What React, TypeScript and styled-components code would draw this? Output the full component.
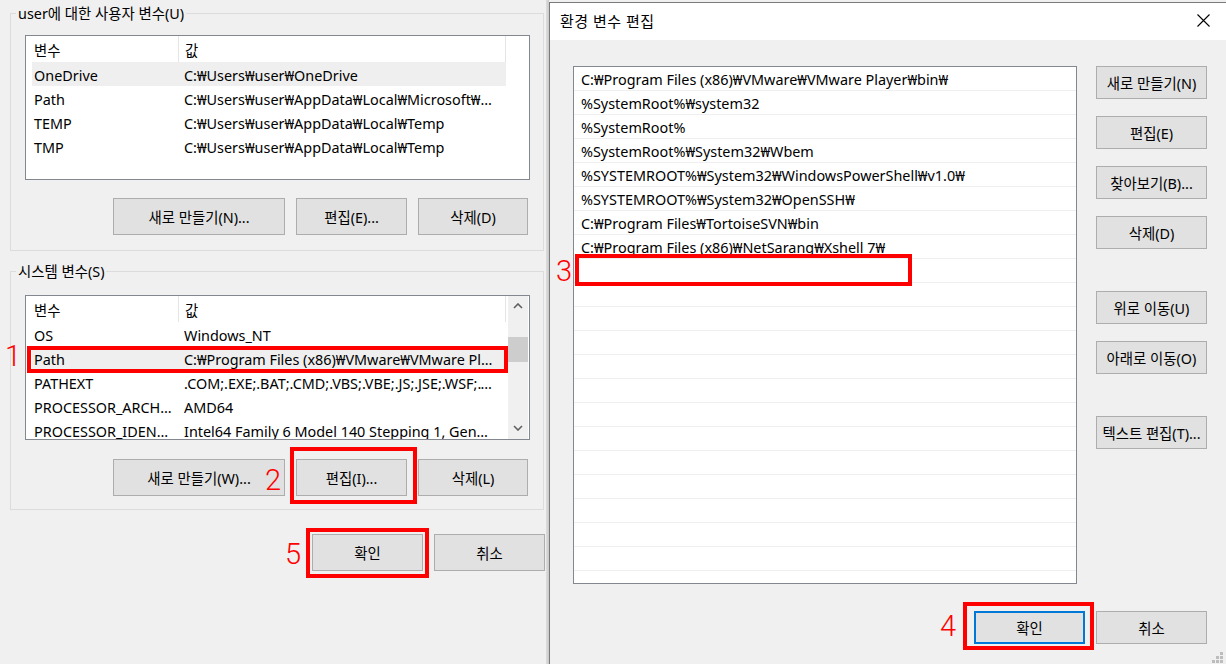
import React from 'react';
import styled, { createGlobalStyle } from 'styled-components';

const GlobalStyle = createGlobalStyle`
  html, body {
    margin: 0;
    padding: 0;
  }
  body {
    background: #f0f0f0;
    font-family: "Noto Sans", "Noto Sans CJK KR", sans-serif;
    font-size: 14.4px;
    color: #000;
    overflow: hidden;
  }
`;

const Screen = styled.div`
  position: relative;
  display: flex;
  width: 1226px;
  height: 664px;
  overflow: hidden;
  background: #f0f0f0;
`;

/* ---------- left window (환경 변수) ---------- */

const LeftPane = styled.div`
  flex: none;
  width: 546px;
  box-sizing: border-box;
  padding: 0 2px 0 10px;
`;

const Shadow = styled.div`
  flex: none;
  width: 3px;
  background: linear-gradient(to right, #dedede, #c9c9c9);
`;

const Group = styled.div<{ $top: number; $bottom: number }>`
  margin-top: ${p => p.$top}px;
  border: 1px solid #dcdcdc;
  padding: 0 13px ${p => p.$bottom}px 14px;
`;

const Legend = styled.div`
  width: fit-content;
  height: 20px;
  line-height: 20px;
  margin: -10px 0 0 -9px;
  padding: 0 2px;
  background: #f0f0f0;
`;

const ListBox = styled.div<{ $top: number }>`
  margin-top: ${p => p.$top}px;
  height: 145px;
  box-sizing: border-box;
  border: 1px solid #828790;
  background: #fff;
  display: flex;
  overflow: hidden;
`;

const ListContent = styled.div`
  flex: none;
  width: 482px;
`;

const HeaderRow = styled.div`
  display: flex;
  width: 480px;
  height: 26px;
`;

const HeaderCell = styled.div<{ $w: number; $pad: number }>`
  width: ${p => p.$w}px;
  height: 26px;
  box-sizing: border-box;
  padding-left: ${p => p.$pad}px;
  line-height: 30px;
  overflow: hidden;
  border-right: 1px solid #e5e5e5;
`;

const VarRow = styled.div<{ $selected?: boolean }>`
  display: flex;
  width: 474px;
  height: 24px;
  margin-left: 6px;
  line-height: 28px;
  background: ${p => (p.$selected ? '#efefef' : 'transparent')};
`;

const VarName = styled.div`
  flex: none;
  width: 150px;
  box-sizing: border-box;
  padding: 0 6px 0 2px;
  white-space: nowrap;
  overflow: hidden;
  text-overflow: ellipsis;
`;

const VarValue = styled.div`
  flex: 1;
  min-width: 0;
  padding: 0 10px 0 2px;
  white-space: nowrap;
  overflow: hidden;
  text-overflow: ellipsis;
`;

const ScrollBar = styled.div`
  flex: none;
  width: 20px;
  display: flex;
  flex-direction: column;
  background: #f0f0f0;
`;

const ScrollArrow = styled.div<{ $bottom?: boolean }>`
  height: 20px;
  display: flex;
  align-items: center;
  justify-content: center;
  margin-bottom: ${p => (p.$bottom ? '1px' : '0')};
`;

const ScrollThumb = styled.div`
  height: 25px;
  margin-top: 21px;
  background: #cdcdcd;
`;

const ScrollSpace = styled.div`
  flex: 1;
`;

const ButtonRow = styled.div<{ $top: number }>`
  display: flex;
  justify-content: flex-end;
  gap: 11px;
  margin: ${p => p.$top}px 2px 0 0;
`;

const Button = styled.button<{ $w: number; $h: number; $default?: boolean }>`
  width: ${p => p.$w}px;
  height: ${p => p.$h}px;
  box-sizing: border-box;
  padding: 0;
  border: ${p => (p.$default ? '2px solid #0078d7' : '1px solid #adadad')};
  background: #e1e1e1;
  font-family: inherit;
  font-size: 14.4px;
  color: #000;
  white-space: nowrap;
`;

const LeftFooter = styled.div`
  display: flex;
  justify-content: flex-end;
  gap: 11px;
  margin: 24px -1px 0 0;
`;

/* ---------- 환경 변수 편집 dialog ---------- */

const Dialog = styled.div`
  flex: 1;
  margin-top: 2px;
  border-left: 1px solid #7a7a7a;
  border-top: 1px solid #7a7a7a;
  display: flex;
  flex-direction: column;
  background: #f0f0f0;
`;

const TitleBar = styled.div`
  height: 37px;
  box-sizing: border-box;
  padding: 0 16px 3px 10px;
  display: flex;
  align-items: center;
  justify-content: space-between;
  background: #fff;
  font-size: 15px;
  letter-spacing: 0.5px;
`;

const DialogBody = styled.div`
  display: flex;
  flex-direction: column;
  padding: 26px 19px 0 23px;
`;

const MainRow = styled.div`
  display: flex;
  gap: 19px;
`;

const PathList = styled.div`
  flex: none;
  width: 504px;
  height: 518px;
  box-sizing: border-box;
  border: 1px solid #828790;
  background: #fff;
  overflow: hidden;
`;

const PathRow = styled.div`
  height: 24px;
  box-sizing: border-box;
  padding-left: 7px;
  line-height: 25px;
  border-bottom: 1px solid #efefef;
  white-space: nowrap;
  overflow: hidden;
`;

const SideColumn = styled.div`
  display: flex;
  flex-direction: column;
  gap: 42px;
`;

const SideGroup = styled.div`
  display: flex;
  flex-direction: column;
  gap: 17px;
`;

const DialogFooter = styled.div`
  display: flex;
  justify-content: flex-end;
  gap: 11px;
  margin-top: 27px;
`;

const Grip = styled.svg`
  position: absolute;
  right: 3px;
  bottom: 1px;
`;

/* ---------- red annotations drawn over the screenshot ---------- */

const RedFrame = styled.div<{ $x: number; $y: number; $w: number; $h: number }>`
  position: absolute;
  left: ${p => p.$x}px;
  top: ${p => p.$y}px;
  width: ${p => p.$w}px;
  height: ${p => p.$h}px;
  box-sizing: border-box;
  border: 4px solid #ff0000;
  pointer-events: none;
`;

const RedNum = styled.div<{ $x: number; $y: number }>`
  position: absolute;
  left: ${p => p.$x - 15}px;
  top: ${p => p.$y - 16}px;
  width: 30px;
  height: 30px;
  line-height: 30px;
  text-align: center;
  font-family: Roboto, "Noto Sans", sans-serif;
  font-weight: 300;
  font-size: 29px;
  color: #ff0000;
`;

const userVars = [
  { name: 'OneDrive', value: 'C:₩Users₩user₩OneDrive', selected: true },
  { name: 'Path', value: 'C:₩Users₩user₩AppData₩Local₩Microsoft₩WindowsApps;' },
  { name: 'TEMP', value: 'C:₩Users₩user₩AppData₩Local₩Temp' },
  { name: 'TMP', value: 'C:₩Users₩user₩AppData₩Local₩Temp' },
];

const systemVars = [
  { name: 'OS', value: 'Windows_NT' },
  { name: 'Path', value: 'C:₩Program Files (x86)₩VMware₩VMware Player₩bin₩;C:₩Windows', selected: true },
  { name: 'PATHEXT', value: '.COM;.EXE;.BAT;.CMD;.VBS;.VBE;.JS;.JSE;.WSF;.WSH;.MSC' },
  { name: 'PROCESSOR_ARCHITECTURE', value: 'AMD64' },
  { name: 'PROCESSOR_IDENTIFIER', value: 'Intel64 Family 6 Model 140 Stepping 1, GenuineIntel' },
];

const paths = [
  'C:₩Program Files (x86)₩VMware₩VMware Player₩bin₩',
  '%SystemRoot%₩system32',
  '%SystemRoot%',
  '%SystemRoot%₩System32₩Wbem',
  '%SYSTEMROOT%₩System32₩WindowsPowerShell₩v1.0₩',
  '%SYSTEMROOT%₩System32₩OpenSSH₩',
  'C:₩Program Files₩TortoiseSVN₩bin',
  'C:₩Program Files (x86)₩NetSarang₩Xshell 7₩',
];

const pathRows = [...paths, ...Array(14).fill('')];

const Chevron: React.FC<{ down?: boolean }> = ({ down }) => (
  <svg width="10" height="6" viewBox="0 0 10 6">
    <polyline
      points={down ? '1,1 5,5 9,1' : '1,5 5,1 9,5'}
      fill="none"
      stroke="#606060"
      strokeWidth="1.6"
    />
  </svg>
);

type Var = { name: string; value: string; selected?: boolean };

const VarList: React.FC<{ items: Var[]; top: number; scroll?: boolean }> = ({ items, top, scroll }) => (
  <ListBox $top={top}>
    <ListContent>
      <HeaderRow>
        <HeaderCell $w={153} $pad={8}>변수</HeaderCell>
        <HeaderCell $w={327} $pad={6}>값</HeaderCell>
      </HeaderRow>
      {items.map(v => (
        <VarRow key={v.name} $selected={v.selected}>
          <VarName>{v.name}</VarName>
          <VarValue>{v.value}</VarValue>
        </VarRow>
      ))}
    </ListContent>
    {scroll && (
      <ScrollBar>
        <ScrollArrow><Chevron /></ScrollArrow>
        <ScrollThumb />
        <ScrollSpace />
        <ScrollArrow $bottom><Chevron down /></ScrollArrow>
      </ScrollBar>
    )}
  </ListBox>
);

const App: React.FC = () => (
  <Screen>
    <GlobalStyle />
    <LeftPane>
      <Group $top={13} $bottom={15}>
        <Legend>user에 대한 사용자 변수(U)</Legend>
        <VarList items={userVars} top={11} />
        <ButtonRow $top={18}>
          <Button $w={172} $h={37}>새로 만들기(N)...</Button>
          <Button $w={111} $h={37}>편집(E)...</Button>
          <Button $w={110} $h={37}>삭제(D)</Button>
        </ButtonRow>
      </Group>
      <Group $top={20} $bottom={13}>
        <Legend>시스템 변수(S)</Legend>
        <VarList items={systemVars} top={13} scroll />
        <ButtonRow $top={19}>
          <Button $w={172} $h={37}>새로 만들기(W)...</Button>
          <Button $w={111} $h={37}>편집(I)...</Button>
          <Button $w={110} $h={37}>삭제(L)</Button>
        </ButtonRow>
      </Group>
      <LeftFooter>
        <Button $w={111} $h={37}>확인</Button>
        <Button $w={111} $h={37}>취소</Button>
      </LeftFooter>
    </LeftPane>
    <Shadow />
    <Dialog>
      <TitleBar>
        <span>환경 변수 편집</span>
        <svg width="13" height="13" viewBox="0 0 13 13">
          <path d="M0.5 0.5 L12.5 12.5 M12.5 0.5 L0.5 12.5" stroke="#000" strokeWidth="1.1" />
        </svg>
      </TitleBar>
      <DialogBody>
        <MainRow>
          <PathList>
            {pathRows.map((p, i) => (
              <PathRow key={i}>{p}</PathRow>
            ))}
          </PathList>
          <SideColumn>
            <SideGroup>
              <Button $w={111} $h={33}>새로 만들기(N)</Button>
              <Button $w={111} $h={33}>편집(E)</Button>
              <Button $w={111} $h={33}>찾아보기(B)...</Button>
              <Button $w={111} $h={33}>삭제(D)</Button>
            </SideGroup>
            <SideGroup>
              <Button $w={111} $h={33}>위로 이동(U)</Button>
              <Button $w={111} $h={33}>아래로 이동(O)</Button>
            </SideGroup>
            <SideGroup>
              <Button $w={111} $h={33}>텍스트 편집(T)...</Button>
            </SideGroup>
          </SideColumn>
        </MainRow>
        <DialogFooter>
          <Button $w={111} $h={33} $default>확인</Button>
          <Button $w={111} $h={33}>취소</Button>
        </DialogFooter>
      </DialogBody>
    </Dialog>
    <Grip width="11" height="11" viewBox="0 0 11 11">
      {[[8, 0], [4, 4], [8, 4], [0, 8], [4, 8], [8, 8]].map(([x, y]) => (
        <rect key={`${x}-${y}`} x={x} y={y} width="3" height="3" fill="#bdbdbd" />
      ))}
    </Grip>

    <RedFrame $x={27} $y={346} $w={481} $h={27} />
    <RedNum $x={13} $y={357}>1</RedNum>
    <RedFrame $x={290} $y={447} $w={127} $h={57} />
    <RedNum $x={273} $y={481}>2</RedNum>
    <RedFrame $x={575} $y={254} $w={337} $h={32} />
    <RedNum $x={564} $y={272}>3</RedNum>
    <RedFrame $x={963} $y={602} $w={131} $h={48} />
    <RedNum $x={948} $y={627}>4</RedNum>
    <RedFrame $x={306} $y={528} $w={123} $h={50} />
    <RedNum $x={293} $y={555}>5</RedNum>
  </Screen>
);

export default App;
